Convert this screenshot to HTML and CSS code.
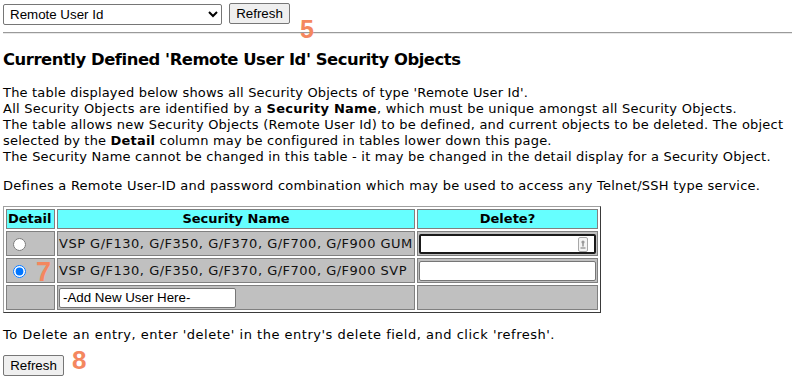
FILE: index.html
```html
<!DOCTYPE html>
<html>
<head>
<meta charset="utf-8">
<link rel="stylesheet" href="styles.css">
</head>
<body>
<form class="topbar">
  <select class="type-select">
    <option>Remote User Id</option>
  </select>
  <span class="btn-wrap">
    <button type="button" class="btn">Refresh</button>
    <span class="note note-5">5</span>
  </span>
</form>
<hr class="rule">
<h3 class="title">Currently Defined 'Remote User Id' Security Objects</h3>
<p class="intro"><span class="ln l1">The table displayed below shows all Security Objects of type 'Remote User Id'.</span><br><span class="ln l2">All Security Objects are identified by a <b>Security Name</b>, which must be unique amongst all Security Objects.</span><br><span class="ln l3">The table allows new Security Objects (Remote User Id) to be defined, and current objects to be deleted. The object</span><br><span class="ln l4">selected by the <b>Detail</b> column may be configured in tables lower down this page.</span><br><span class="ln l5">The Security Name cannot be changed in this table - it may be changed in the detail display for a Security Object.</span></p>
<p class="desc"><span class="ln l6">Defines a Remote User-ID and password combination which may be used to access any Telnet/SSH type service.</span></p>
<table class="objs">
  <tr class="head">
    <th class="c-detail">Detail</th>
    <th class="c-name">Security Name</th>
    <th class="c-del">Delete?</th>
  </tr>
  <tr>
    <td class="c-detail"><input type="radio" name="sel" class="radio"></td>
    <td class="c-name">VSP G/F130, G/F350, G/F370, G/F700, G/F900 GUM</td>
    <td class="c-del"><span class="field focused"><input type="text" class="txt"><svg class="keyicon" width="10" height="15" viewBox="0 0 10 15"><rect x="0.5" y="0.5" width="9" height="14" rx="1.5" fill="#f4f4f4" stroke="#a8a8a8"/><circle cx="5" cy="5" r="1.6" fill="#9a9a9a"/><rect x="4.2" y="5" width="1.6" height="4.5" fill="#9a9a9a"/><rect x="2.5" y="10" width="5" height="2" fill="#b4b4b4"/></svg></span></td>
  </tr>
  <tr>
    <td class="c-detail"><span class="radio-wrap"><input type="radio" name="sel" class="radio" checked><span class="note note-7">7</span></span></td>
    <td class="c-name">VSP G/F130, G/F350, G/F370, G/F700, G/F900 SVP</td>
    <td class="c-del"><span class="field"><input type="text" class="txt"></span></td>
  </tr>
  <tr>
    <td class="c-detail"></td>
    <td class="c-name"><input type="text" class="txt add" value="-Add New User Here-"></td>
    <td class="c-del"></td>
  </tr>
</table>
<p class="hint"><span class="ln l7">To Delete an entry, enter 'delete' in the entry's delete field, and click 'refresh'.</span></p>
<div class="bottom">
  <span class="btn-wrap">
    <button type="button" class="btn">Refresh</button>
    <span class="note note-8">8</span>
  </span>
</div>
</body>
</html>
```

FILE: styles.css
```css
html, body {
  margin: 0;
  padding: 0;
  background: #fff;
}
body {
  padding: 3px 0 0 3px;
  font-family: "DejaVu Sans", Verdana, sans-serif;
  font-size: 13px;
  color: #000;
  overflow: hidden;
}
.topbar {
  display: flex;
  align-items: flex-start;
  gap: 7px;
  height: 22px;
  margin: 0;
}
.type-select {
  width: 219px;
  height: 21px;
  margin: 1px 0 0 0;
  font-family: "Liberation Sans", Arial, sans-serif;
  font-size: 13.33px;
  color: #000;
  background: #fff;
  border: 1px solid #767676;
  border-radius: 2px;
  padding: 0 0 0 2px;
}
.btn-wrap {
  position: relative;
  display: inline-block;
}
.btn {
  width: 61px;
  height: 21px;
  margin: 0;
  padding: 0;
  font-family: "Liberation Sans", Arial, sans-serif;
  font-size: 13.33px;
  color: #000;
  background: #efefef;
  border: 1px solid #767676;
  border-radius: 2px;
}
.note {
  position: absolute;
  font-family: "Liberation Sans", Arial, sans-serif;
  font-weight: bold;
  font-size: 25px;
  line-height: 25px;
  color: #f4875f;
  letter-spacing: 0;
}
.note-5 {
  left: 71px;
  top: 14px;
}
.note-7 {
  left: 28px;
  top: -3px;
  font-size: 27px;
}
.note-8 {
  left: 69px;
  top: -7px;
  font-size: 26px;
}
.rule {
  margin: 7px 0 0 0;
  border: 0;
  border-top: 1px solid #9a9a9a;
  border-bottom: 1px solid #e8e8e8;
  height: 0;
}
.title {
  margin: 16px 0 0 0;
  font-size: 16.4px;
  line-height: 20px;
  font-weight: bold;
  letter-spacing: -0.45px;
}
.ln {
  white-space: nowrap;
  letter-spacing: 0.3px;
}
.l1 { letter-spacing: 0.19px; }
.l2 { letter-spacing: 0.24px; }
.l3 { letter-spacing: 0.22px; }
.l4 { letter-spacing: 0.19px; }
.l5 { letter-spacing: 0.21px; }
.l6 { letter-spacing: 0.245px; }
.l7 { letter-spacing: 0.51px; }
.intro {
  margin: 15px 0 0 0;
  line-height: 16px;
  white-space: nowrap;
}
.desc {
  margin: 13px 0 0 0;
  line-height: 16px;
}
.objs {
  margin: 12px 0 0 0;
  border-collapse: separate;
  border-spacing: 2px;
  border: 1px solid;
  border-color: #a0a0a0 #3a3a3a #3a3a3a #a0a0a0;
}
.objs th, .objs td {
  border: 1px solid #808080;
  padding: 1px;
  line-height: 16px;
  font-size: 13px;
}
.objs th {
  background: #66ffff;
  font-weight: bold;
  text-align: center;
  height: 16px;
}
.objs td {
  background: #c0c0c0;
  height: 21px;
  white-space: nowrap;
  color: #111;
  letter-spacing: 0.5px;
}
.c-detail { width: 45px; }
.c-name { width: 354px; }
.c-del { width: 177px; }
.objs th.c-detail { text-align: left; }
.radio-wrap {
  position: relative;
  display: inline-block;
}
.radio {
  margin: 1px 3px 0 5px;
  width: 13px;
  height: 13px;
  vertical-align: middle;
}
.field {
  position: relative;
  display: block;
  width: 177px;
  height: 20px;
}
.txt {
  box-sizing: border-box;
  display: block;
  width: 177px;
  height: 20px;
  margin: 0;
  padding: 1px 3px;
  font-family: "Liberation Sans", Arial, sans-serif;
  font-size: 13.33px;
  letter-spacing: 0;
  color: #000;
  background: #fff;
  border: 1px solid #767676;
  border-radius: 2px;
}
.focused .txt {
  border: 2px solid #1a1a1a;
  border-radius: 2px;
}
.keyicon {
  position: absolute;
  right: 8px;
  top: 3px;
}
.add {
  width: 177px;
}
.hint {
  margin: 14px 0 0 0;
  line-height: 16px;
}
.bottom {
  margin: 12px 0 0 0;
}
```
